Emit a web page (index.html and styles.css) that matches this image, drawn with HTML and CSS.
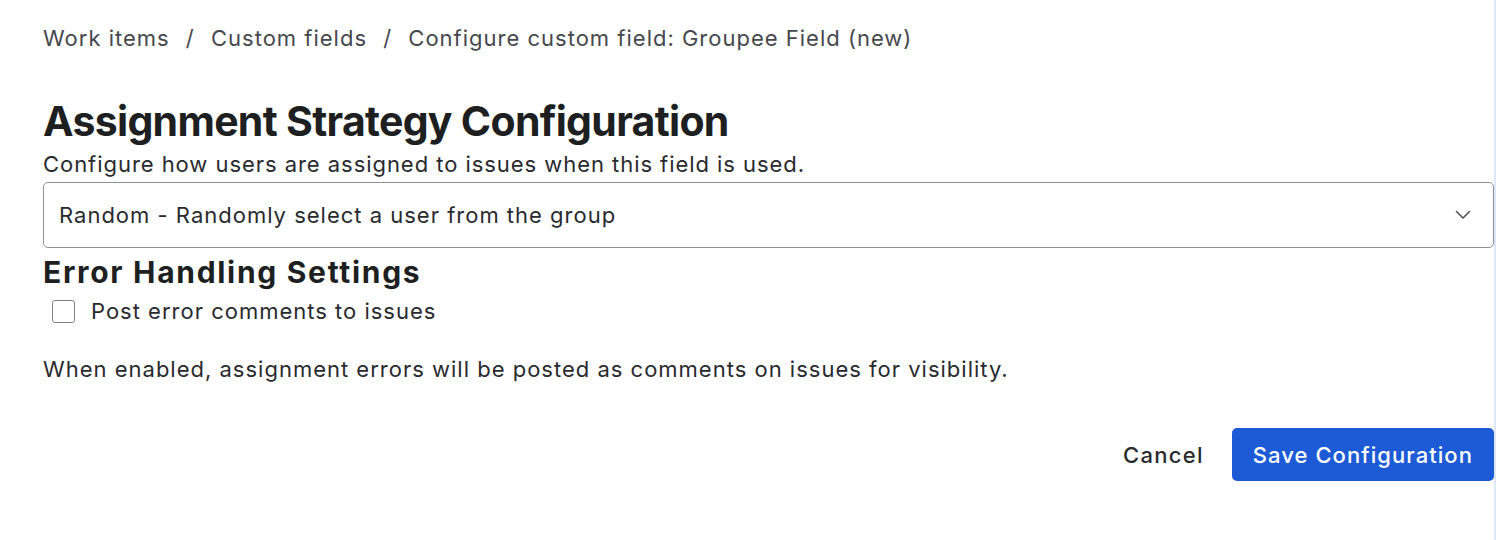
FILE: index.html
```html
<!DOCTYPE html>
<html lang="en">
<head>
  <meta charset="UTF-8">
  <meta name="viewport" content="width=device-width, initial-scale=1.0">
  <title>Configure custom field</title>
  <link rel="stylesheet" href="styles.css">
</head>
<body>

  <div class="page">
    <nav class="breadcrumbs">
      <a href="#">Work items</a>
      <span class="sep">/</span>
      <a href="#">Custom fields</a>
      <span class="sep">/</span>
      <span>Configure custom field: Groupee Field (new)</span>
    </nav>

    <h1 class="title">Assignment Strategy Configuration</h1>
    <p class="subtitle">Configure how users are assigned to issues when this field is used.</p>

    <div class="select">
      <span>Random - Randomly select a user from the group</span>
      <svg class="chevron" width="16" height="10" viewBox="0 0 16 10">
        <path d="M1.5 1.5 L8 8 L14.5 1.5" fill="none" stroke="#505258" stroke-width="1.6" stroke-linecap="round" stroke-linejoin="round"/>
      </svg>
    </div>

    <h2 class="section">Error Handling Settings</h2>
    <label class="check">
      <span class="box"></span>
      Post error comments to issues
    </label>
    <p class="help">When enabled, assignment errors will be posted as comments on issues for visibility.</p>

    <div class="actions">
      <button class="btn-subtle">Cancel</button>
      <button class="btn-primary">Save Configuration</button>
    </div>
  </div>

</body>
</html>
```

FILE: styles.css
```css
body {
  margin: 0;
  font-family: Inter, "Noto Sans", sans-serif;
  letter-spacing: 1px;
  color: #292a2e;
  background-color: #fff;
}

.page {
  width: 1451px;
  min-height: 540px;
  padding: 22px 0 0 43px;
  box-sizing: content-box;
  border-right: 2px solid #dde7f7;
}

.breadcrumbs {
  font-size: 22px;
  line-height: 32px;
  color: #46484d;
}

.breadcrumbs a {
  color: inherit;
  text-decoration: none;
}

.breadcrumbs .sep {
  margin: 0 9px;
}

.title {
  margin: 43px 0 0;
  font-size: 41px;
  line-height: 48px;
  font-weight: 700;
  letter-spacing: -0.7px;
  color: #1e1f21;
}

.subtitle {
  margin: 5px 0 0;
  font-size: 22px;
  line-height: 28px;
  letter-spacing: 0.95px;
}

.select {
  margin-top: 4px;
  height: 66px;
  box-sizing: border-box;
  border: 1.5px solid #8c8f97;
  border-radius: 5px;
  padding: 0 22px 0 15px;
  display: flex;
  align-items: center;
  justify-content: space-between;
  font-size: 22px;
}

.section {
  margin: 6px 0 0;
  font-size: 30px;
  line-height: 36px;
  font-weight: 700;
  letter-spacing: 1.7px;
  color: #1e1f21;
}

.check {
  margin-top: 5px;
  display: flex;
  align-items: center;
  gap: 16px;
  padding-left: 9px;
  font-size: 22px;
  line-height: 32px;
}

.box {
  width: 23px;
  height: 23px;
  box-sizing: border-box;
  border: 1.5px solid #7d818a;
  border-radius: 3px;
}

.help {
  margin: 28px 0 0;
  font-size: 22px;
  line-height: 28px;
}

.actions {
  margin-top: 45px;
  display: flex;
  justify-content: flex-end;
  align-items: center;
  gap: 14px;
}

.actions button {
  font-family: inherit;
  font-size: 22px;
  font-weight: 500;
  height: 53px;
  border-radius: 5px;
  border: none;
  cursor: pointer;
}

.btn-subtle {
  background: none;
  color: #292a2e;
  letter-spacing: 1.3px;
  padding: 0 14px;
}

.btn-primary {
  background-color: #1d5bd6;
  color: #fff;
  font-weight: 600;
  letter-spacing: 1.05px;
  padding: 0 21px;
}
```
